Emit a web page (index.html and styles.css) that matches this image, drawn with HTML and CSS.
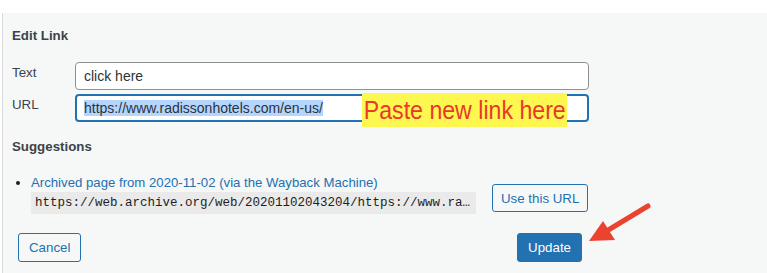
FILE: index.html
```html
<!DOCTYPE html>
<html lang="en">
<head>
    <meta charset="UTF-8">
    <meta name="viewport" content="width=device-width, initial-scale=1.0">
    <title>Edit Link</title>
    <link rel="stylesheet" href="styles.css">
</head>
<body>

<div class="top-strip"></div>

<div class="panel">
    <h2 class="section-title">Edit Link</h2>

    <div class="fields">
        <label class="field-label">Text</label>
        <div class="field-input">click here</div>

        <label class="field-label">URL</label>
        <div class="field-input focused">
            <span class="selected">https://www.radissonhotels.com/en-us/</span>
            <div class="callout"><span>Paste new link here</span></div>
        </div>
    </div>

    <h2 class="section-title suggestions-title">Suggestions</h2>

    <div class="suggestion">
        <ul class="suggestion-list">
            <li>
                <a href="#" class="suggestion-link">Archived page from 2020-11-02 (via the Wayback Machine)</a>
                <code class="suggestion-url">https://web.archive.org/web/20201102043204/https://www.ra…</code>
            </li>
        </ul>
        <button class="btn btn-secondary use-url">Use this URL</button>
    </div>

    <div class="footer">
        <button class="btn btn-secondary">Cancel</button>
        <button class="btn btn-primary">Update</button>
    </div>

    <svg class="arrow" width="80" height="50" viewBox="0 0 80 50">
        <line x1="67" y1="8" x2="24" y2="34" stroke="#ea4330" stroke-width="5" stroke-linecap="round"/>
        <polygon points="8,43 22,23 34,42" fill="#ea4330"/>
    </svg>
</div>

</body>
</html>
```

FILE: styles.css
```css
body {
    margin: 0;
    width: 767px;
    height: 273px;
    overflow: hidden;
    background-color: #ffffff;
    font-family: 'Liberation Sans', Arial, sans-serif;
    font-size: 13px;
    color: #1e1e1e;
}

.top-strip {
    height: 13px;
    background-color: #ffffff;
}

.panel {
    position: relative;
    margin-left: 2px;
    border-left: 1px solid #dcdcde;
    background-color: #f6f7f7;
    padding: 13px 0 20px 9px;
    height: 260px;
    box-sizing: border-box;
}

.section-title {
    margin: 0;
    font-size: 13.3px;
    line-height: 20px;
    font-weight: bold;
    color: #3c434a;
}

.fields {
    display: grid;
    grid-template-columns: 63px 514px;
    row-gap: 4px;
    margin-top: 16px;
}

.field-label {
    padding-top: 1px;
    line-height: 20px;
    font-size: 13.3px;
    color: #3c434a;
}

.field-input {
    position: relative;
    height: 28px;
    box-sizing: border-box;
    border: 1px solid #8c8f94;
    border-radius: 4px;
    background-color: #ffffff;
    padding: 0 8px;
    font-size: 14px;
    line-height: 26px;
    color: #2c3338;
}

.field-input.focused {
    border: 2px solid #2271b1;
    padding: 0 7px;
    line-height: 24px;
}

.selected {
    background-color: #b4d5fe;
}

.callout {
    position: absolute;
    left: 285px;
    top: -3px;
    width: 205px;
    height: 34px;
    background-color: #fdf750;
    overflow: hidden;
}

.callout span {
    display: inline-block;
    font-size: 26px;
    line-height: 34px;
    color: #e8392c;
    transform: scaleX(0.89);
    transform-origin: left center;
    white-space: nowrap;
    padding-left: 2px;
}

.suggestions-title {
    margin-top: 15px;
}

.suggestion {
    display: flex;
    align-items: flex-start;
    margin-top: 18px;
}

.suggestion-list {
    margin: 0;
    padding-left: 19px;
    width: 445px;
}

.suggestion-list li {
    line-height: 16px;
    font-size: 13.2px;
}

.suggestion-link {
    color: #2271b1;
    text-decoration: none;
}

.suggestion-url {
    display: block;
    margin-top: 1px;
    height: 22px;
    background-color: #eaeaea;
    font-family: 'Liberation Mono', 'Courier New', monospace;
    font-size: 12.5px;
    line-height: 22px;
    padding: 0 4px;
    white-space: nowrap;
    overflow: hidden;
    color: #1e1e1e;
}

.btn {
    font-family: 'Liberation Sans', Arial, sans-serif;
    font-size: 13.3px;
    height: 29px;
    padding: 0 10px;
    border-radius: 3px;
    white-space: nowrap;
    cursor: pointer;
}

.btn-secondary {
    border: 1px solid #2271b1;
    background-color: #f6f7f7;
    color: #2271b1;
}

.btn-primary {
    border: 1px solid #2271b1;
    background-color: #2271b1;
    color: #ffffff;
}

.use-url {
    margin-left: 16px;
    margin-top: 9px;
    height: 28px;
    padding: 0 8px;
}

.footer {
    display: flex;
    justify-content: space-between;
    width: 564px;
    margin-top: 19px;
    padding-left: 6px;
}

.arrow {
    position: absolute;
    left: 578px;
    top: 185px;
}
```
